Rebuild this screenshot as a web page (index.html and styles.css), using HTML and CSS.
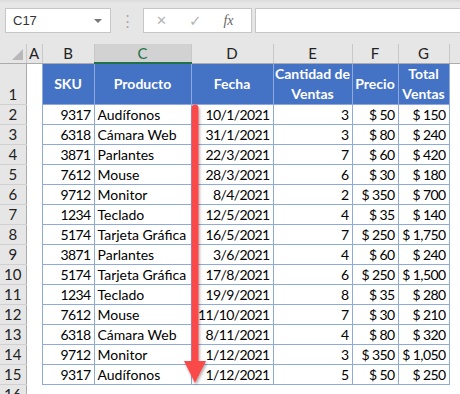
FILE: index.html
```html
<!DOCTYPE html>
<html lang="es">
<head>
    <meta charset="UTF-8">
    <title>Ventas</title>
    <link rel="stylesheet" href="styles.css">
</head>
<body>
    <div id="sheet">
        <!-- barra de fórmulas -->
        <div class="formula-bar">
            <div class="name-box">
                <span>C17</span>
                <span class="drop"></span>
            </div>
            <div class="dots">⋮</div>
            <div class="func-box">
                <span class="btn-x">✕</span>
                <span class="btn-ok">✓</span>
                <span class="btn-fx">fx</span>
            </div>
            <div class="formula-input"></div>
        </div>

        <!-- hoja -->
        <table class="grid">
            <colgroup>
                <col class="c-row"><col class="c-a"><col class="c-b"><col class="c-c"><col class="c-d"><col class="c-e"><col class="c-f"><col class="c-g"><col>
            </colgroup>
            <tr class="col-heads">
                <th class="corner"><span class="tri"></span></th>
                <th>A</th><th>B</th><th class="sel">C</th><th>D</th><th>E</th><th>F</th><th>G</th><th class="rest"></th>
            </tr>
            <tr class="head-row">
                <th class="rh">1</th><td class="blank"></td>
                <td class="th">SKU</td><td class="th">Producto</td><td class="th">Fecha</td>
                <td class="th">Cantidad de<br>Ventas</td><td class="th">Precio</td><td class="th">Total<br>Ventas</td>
                <td class="blank"></td>
            </tr>
            <tr><th class="rh">2</th><td class="blank"></td><td class="n">9317</td><td class="t">Audífonos</td><td class="n">10/1/2021</td><td class="n">3</td><td class="n">$ 50</td><td class="n">$ 150</td><td class="blank"></td></tr>
            <tr><th class="rh">3</th><td class="blank"></td><td class="n">6318</td><td class="t">Cámara Web</td><td class="n">31/1/2021</td><td class="n">3</td><td class="n">$ 80</td><td class="n">$ 240</td><td class="blank"></td></tr>
            <tr><th class="rh">4</th><td class="blank"></td><td class="n">3871</td><td class="t">Parlantes</td><td class="n">22/3/2021</td><td class="n">7</td><td class="n">$ 60</td><td class="n">$ 420</td><td class="blank"></td></tr>
            <tr><th class="rh">5</th><td class="blank"></td><td class="n">7612</td><td class="t">Mouse</td><td class="n">28/3/2021</td><td class="n">6</td><td class="n">$ 30</td><td class="n">$ 180</td><td class="blank"></td></tr>
            <tr><th class="rh">6</th><td class="blank"></td><td class="n">9712</td><td class="t">Monitor</td><td class="n">8/4/2021</td><td class="n">2</td><td class="n">$ 350</td><td class="n">$ 700</td><td class="blank"></td></tr>
            <tr><th class="rh">7</th><td class="blank"></td><td class="n">1234</td><td class="t">Teclado</td><td class="n">12/5/2021</td><td class="n">4</td><td class="n">$ 35</td><td class="n">$ 140</td><td class="blank"></td></tr>
            <tr><th class="rh">8</th><td class="blank"></td><td class="n">5174</td><td class="t">Tarjeta Gráfica</td><td class="n">16/5/2021</td><td class="n">7</td><td class="n">$ 250</td><td class="n">$ 1,750</td><td class="blank"></td></tr>
            <tr><th class="rh">9</th><td class="blank"></td><td class="n">3871</td><td class="t">Parlantes</td><td class="n">3/6/2021</td><td class="n">4</td><td class="n">$ 60</td><td class="n">$ 240</td><td class="blank"></td></tr>
            <tr><th class="rh">10</th><td class="blank"></td><td class="n">5174</td><td class="t">Tarjeta Gráfica</td><td class="n">17/8/2021</td><td class="n">6</td><td class="n">$ 250</td><td class="n">$ 1,500</td><td class="blank"></td></tr>
            <tr><th class="rh">11</th><td class="blank"></td><td class="n">1234</td><td class="t">Teclado</td><td class="n">19/9/2021</td><td class="n">8</td><td class="n">$ 35</td><td class="n">$ 280</td><td class="blank"></td></tr>
            <tr><th class="rh">12</th><td class="blank"></td><td class="n">7612</td><td class="t">Mouse</td><td class="n">11/10/2021</td><td class="n">7</td><td class="n">$ 30</td><td class="n">$ 210</td><td class="blank"></td></tr>
            <tr><th class="rh">13</th><td class="blank"></td><td class="n">6318</td><td class="t">Cámara Web</td><td class="n">8/11/2021</td><td class="n">4</td><td class="n">$ 80</td><td class="n">$ 320</td><td class="blank"></td></tr>
            <tr><th class="rh">14</th><td class="blank"></td><td class="n">9712</td><td class="t">Monitor</td><td class="n">1/12/2021</td><td class="n">3</td><td class="n">$ 350</td><td class="n">$ 1,050</td><td class="blank"></td></tr>
            <tr><th class="rh">15</th><td class="blank"></td><td class="n">9317</td><td class="t">Audífonos</td><td class="n">1/12/2021</td><td class="n">5</td><td class="n">$ 50</td><td class="n">$ 250</td><td class="blank"></td></tr>
            <tr><th class="rh">16</th><td class="blank" colspan="8"></td></tr>
        </table>

        <!-- flecha -->
        <svg class="arrow" width="26" height="290" viewBox="0 0 26 290">
            <defs>
                <filter id="sh" x="-50%" y="-10%" width="200%" height="120%">
                    <feDropShadow dx="1" dy="2" stdDeviation="1.5" flood-color="#000" flood-opacity="0.35"/>
                </filter>
            </defs>
            <g filter="url(#sh)">
                <path d="M9.5 6 a3.5 3.5 0 0 1 7 0 V262 h-7 Z" fill="#f94848"/>
                <polygon points="2,259 24,259 13,281" fill="#f94848"/>
            </g>
        </svg>
    </div>
</body>
</html>
```

FILE: styles.css
```css
/* hoja de cálculo */
body {
    margin: 0;
    background: #fff;
    font-family: Lato, "Liberation Sans", sans-serif;
    overflow: hidden;
}

#sheet {
    position: relative;
    width: 460px;
    height: 394px;
    overflow: hidden;
}

.formula-bar {
    height: 44px;
    box-sizing: border-box;
    padding-top: 8px;
    display: flex;
    align-items: flex-start;
    background: linear-gradient(#dadada 0, #e6e6e6 3px);
}

.name-box {
    margin-left: 5px;
    width: 106px;
    height: 25px;
    box-sizing: border-box;
    background: #fff;
    border: 1px solid #c6c6c6;
    display: flex;
    align-items: center;
    justify-content: space-between;
    padding: 0 8px 0 7px;
    font-family: "Liberation Sans", sans-serif;
    font-size: 13px;
    color: #333;
}

.drop {
    width: 0;
    height: 0;
    border-left: 4px solid transparent;
    border-right: 4px solid transparent;
    border-top: 4px solid #777;
}

.dots {
    width: 32px;
    text-align: center;
    line-height: 25px;
    font-size: 15px;
    color: #aaa;
}

.func-box {
    width: 109px;
    height: 25px;
    box-sizing: border-box;
    background: #fff;
    border: 1px solid #c6c6c6;
    display: flex;
    align-items: center;
    font-family: "DejaVu Sans", sans-serif;
    color: #b4b4b4;
}

.btn-x {
    margin-left: 12px;
    font-size: 13px;
}

.btn-ok {
    margin-left: 22px;
    font-size: 15px;
}

.btn-fx {
    margin-left: 22px;
    font-family: "Liberation Serif", serif;
    font-style: italic;
    font-size: 14px;
    color: #666;
}

.formula-input {
    margin-left: 3px;
    flex: 1;
    height: 25px;
    box-sizing: border-box;
    background: #fff;
    border: 1px solid #c6c6c6;
    border-right: none;
}

.grid {
    border-collapse: collapse;
    table-layout: fixed;
    width: 460px;
    font-size: 14px;
    color: #000;
}

.c-row { width: 26px; }
.c-a { width: 16px; }
.c-b { width: 52px; }
.c-c { width: 97px; }
.c-d { width: 82px; }
.c-e { width: 79px; }
.c-f { width: 46px; }
.c-g { width: 51px; }

.grid td,
.grid th {
    padding: 0;
    white-space: nowrap;
    overflow: hidden;
}

.col-heads th {
    height: 18px;
    background: #e6e6e6;
    border-right: 1px solid #c8c8c8;
    border-bottom: 1px solid #ababab;
    font-weight: normal;
    font-size: 15px;
    color: #222;
    line-height: 18px;
}

.col-heads th.sel {
    background: #d2d2d2;
    color: #217346;
    border-bottom: 2px solid #217346;
}

.col-heads th.rest {
    border-right: none;
}

.corner {
    position: relative;
}

.tri {
    position: absolute;
    right: 3px;
    bottom: 3px;
    width: 0;
    height: 0;
    border-left: 11px solid transparent;
    border-bottom: 11px solid #b8b8b8;
}

.rh {
    background: #e6e6e6;
    border-right: 1px solid #ababab;
    border-bottom: 1px solid #d0d0d0;
    font-weight: normal;
    font-size: 15px;
    color: #222;
    text-align: center;
}

.grid tr td,
.grid tr th.rh {
    height: 19px;
    line-height: 19px;
}

.head-row td.th,
.head-row th.rh {
    height: 39px;
}

.head-row th.rh {
    vertical-align: bottom;
    line-height: 19px;
}

.th {
    background: #4472c4;
    color: #fff;
    font-weight: bold;
    text-align: center;
    line-height: 20px !important;
    border: 1px solid #8ea9db;
}

.blank {
    border: none;
    background: #fff;
}

.n {
    text-align: right;
    padding-right: 3px !important;
    letter-spacing: -0.6px;
    border: 1px solid #8ea9db;
}

.t {
    text-align: left;
    padding-left: 3px !important;
    border: 1px solid #8ea9db;
}

.arrow {
    position: absolute;
    left: 182px;
    top: 102px;
}
```
